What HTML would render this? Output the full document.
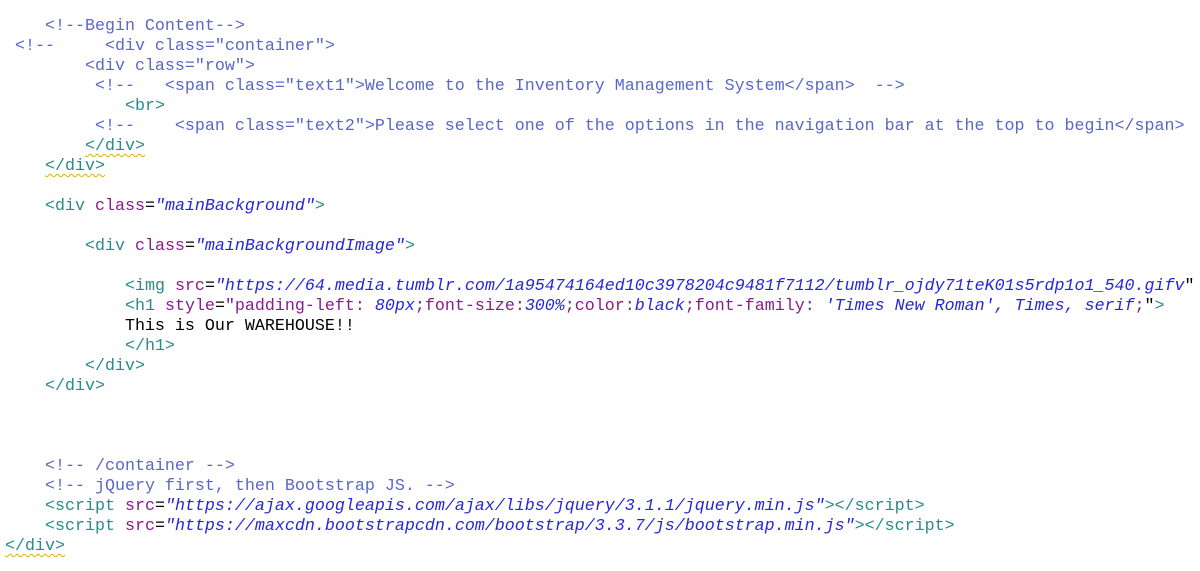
<!DOCTYPE html>
<html><head><meta charset="utf-8"><style>
html,body{margin:0;padding:0;background:#fff;width:1200px;height:571px;overflow:hidden}
pre{margin:0;position:absolute;left:5px;top:17px;font-family:"Liberation Mono","Courier New",monospace;font-size:16.67px;line-height:20px;color:#000;white-space:pre}
.c{color:#5a67c8}
.t{color:#2a8a8a}
.a{color:#8b1a8b}
.v{color:#2626d9;font-style:italic}
.s{color:#8b1a8b}
.w{text-decoration:underline wavy #e0b000;text-decoration-thickness:1px;text-underline-offset:3px}
</style></head><body><pre><span class="c">    &lt;!--Begin Content--&gt;</span>
<span class="c"> &lt;!--     &lt;div class="container"&gt;</span>
        <span class="c">&lt;div class="row"&gt;</span>
<span class="c">         &lt;!--   &lt;span class="text1"&gt;Welcome to the Inventory Management System&lt;/span&gt;  --&gt;</span>
            <span class="t">&lt;br&gt;</span>
<span class="c">         &lt;!--    &lt;span class="text2"&gt;Please select one of the options in the navigation bar at the top to begin&lt;/span&gt;</span>
        <span class="t w">&lt;/div&gt;</span>
    <span class="t w">&lt;/div&gt;</span>

    <span class="t">&lt;div</span> <span class="a">class</span>=<span class="v">"mainBackground"</span><span class="t">&gt;</span>

        <span class="t">&lt;div</span> <span class="a">class</span>=<span class="v">"mainBackgroundImage"</span><span class="t">&gt;</span>

            <span class="t">&lt;img</span> <span class="a">src</span>=<span class="v">"https://64.media.tumblr.com/1a95474164ed10c3978204c9481f7112/tumblr_ojdy71teK01s5rdp1o1_540.gifv</span>"
            <span class="t">&lt;h1</span> <span class="a">style</span>=<span class="s">"padding-left: </span><span class="v">80px</span><span class="s">;font-size:</span><span class="v">300%</span><span class="s">;color:</span><span class="v">black</span><span class="s">;font-family: </span><span class="v">'Times New Roman', Times, serif</span><span class="s">;</span>"<span class="t">&gt;</span>
            This is Our WAREHOUSE!!
            <span class="t">&lt;/h1&gt;</span>
        <span class="t">&lt;/div&gt;</span>
    <span class="t">&lt;/div&gt;</span>



    <span class="c">&lt;!-- /container --&gt;</span>
    <span class="c">&lt;!-- jQuery first, then Bootstrap JS. --&gt;</span>
    <span class="t">&lt;script</span> <span class="a">src</span>=<span class="v">"https://ajax.googleapis.com/ajax/libs/jquery/3.1.1/jquery.min.js"</span><span class="t">&gt;&lt;/script&gt;</span>
    <span class="t">&lt;script</span> <span class="a">src</span>=<span class="v">"https://maxcdn.bootstrapcdn.com/bootstrap/3.3.7/js/bootstrap.min.js"</span><span class="t">&gt;&lt;/script&gt;</span>
<span class="t w">&lt;/div&gt;</span></pre></body></html>
